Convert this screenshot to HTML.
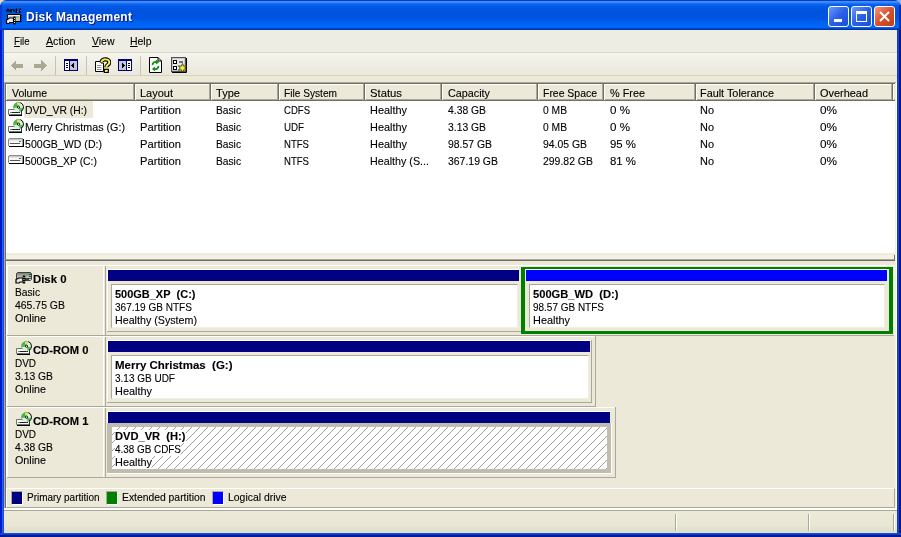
<!DOCTYPE html>
<html><head><meta charset="utf-8">
<style>
*{margin:0;padding:0;box-sizing:border-box}
html,body{width:901px;height:537px;overflow:hidden;background:#ECE9D8}
body{position:relative;font-family:"Liberation Sans",sans-serif;font-size:11px;color:#000}
.a{position:absolute}
.t{white-space:nowrap;line-height:13px;-webkit-text-stroke:0.12px #000}
.b{font-weight:bold}
#win{left:0;top:0;width:901px;height:537px;background:#ECE9D8;border-radius:6px 6px 0 0;overflow:hidden;will-change:transform}
#title{left:0;top:0;width:901px;height:30px;
background:linear-gradient(to bottom,#0a3cc0 0px,#0a3cc0 1px,#3d8eff 1px,#3d8eff 2px,#3487fb 2px,#3487fb 3px,#1c70f3 3px,#1c70f3 4px,#0e63ec 4px,#0e63ec 5px,#075ce8 5px,#075ce8 6px,#0059e5 6px,#0059e5 7px,#0057e3 7px,#0057e3 8px,#0056e1 8px,#0056e1 9px,#0055e0 9px,#0055e0 10px,#0054df 10px,#0054df 11px,#0053de 11px,#0053de 12px,#0053de 12px,#0053de 13px,#0053de 13px,#0053de 14px,#0053de 14px,#0053de 15px,#0053de 15px,#0053de 16px,#0054df 16px,#0054df 17px,#0055e0 17px,#0055e0 18px,#0056e2 18px,#0056e2 19px,#0058e5 19px,#0058e5 20px,#005ae8 20px,#005ae8 21px,#005deb 21px,#005deb 22px,#0060ef 22px,#0060ef 23px,#0063f3 23px,#0063f3 24px,#0065f6 24px,#0065f6 25px,#0066f8 25px,#0066f8 26px,#0066f8 26px,#0066f8 27px,#0063f2 27px,#0063f2 28px,#0048c8 28px,#0048c8 29px,#0036a8 29px,#0036a8 30px)}
#lf{left:0;top:30px;width:4px;height:507px;background:linear-gradient(to right,#0019cf 0,#0019cf 2px,#2060f5 2px,#2060f5 3px,#1a50c8 3px)}
#rf{left:897px;top:30px;width:4px;height:507px;background:linear-gradient(to right,#1f3fb0 0,#1f3fb0 1px,#1848c8 1px,#1848c8 2px,#001890 2px)}
#bf{left:0;top:533px;width:901px;height:4px;background:linear-gradient(to bottom,#1f4fbf 0,#1f4fbf 1px,#1038c0 1px,#1038c0 2px,#001a98 2px)}
.ttl{left:26px;top:10px;font-weight:bold;font-size:12px;line-height:14px;letter-spacing:0.28px;color:#fff;text-shadow:1px 1px 0 #0a1883;white-space:nowrap}
.tb{top:6px;width:21px;height:21px;border:1px solid #fff;border-radius:3px}
.menu{left:4px;top:30px;width:893px;height:22px;background:#eeede4}
.mi u{text-decoration:underline;text-underline-offset:1px}
.tool{left:4px;top:52px;width:893px;height:24px;background:linear-gradient(to bottom,#dcd8c8 0,#dcd8c8 1px,#f5f4ee 1px,#f1f0e8 8px,#eae8dc 23px,#d6d2c0 23px)}
.sep{top:56px;width:1px;height:19px;background:#c8c4b4}
.hatch{background-color:#fff;background-image:repeating-linear-gradient(-45deg,#fff 0,#fff 4.6px,#8a8a8a 4.6px,#8a8a8a 5.66px)}
</style></head><body>
<div class="a" style="left:0;top:0;width:10px;height:10px;background:#f2dca0"></div><div class="a" style="left:891px;top:0;width:10px;height:10px;background:#94acec"></div>
<div id="win" class="a">
<div id="title" class="a"></div>
<svg class="a" style="left:5px;top:7px" width="18" height="18" viewBox="0 0 18 18">
<path d="M1.5 4.5l1.5-2 1.5 2" fill="none" stroke="#000" stroke-width="1.6"/>
<path d="M6 5.5v-2.5h2.5l1 1.5" fill="none" stroke="#000" stroke-width="1.6"/>
<path d="M11.5 6v-4.5" stroke="#000" stroke-width="1.6"/>
<path d="M14.5 6l1-4.5" stroke="#000" stroke-width="1.6"/>
<path d="M3 3.5l0.5-.5M7 4h1M12.5 4v1M15.2 4l.3-1" stroke="#60a0ff" stroke-width="0.8"/>
<path d="M2.5 7.5h13v7h-13z" fill="#c4c4c0" stroke="#000"/>
<path d="M3 8.5h12" stroke="#f0f0f0"/>
<path d="M11 10h3" stroke="#60c060"/>
<path d="M16 8v1M16 10v1M16 12v1M16 14v1" stroke="#000" stroke-width="1.2"/>
<path d="M1.5 13l3-2h4v4.5h-3.5l-1 1h-2.5z" fill="#f0f0f0" stroke="#000" stroke-width="1.2"/>
<path d="M9.5 9.5v8" stroke="#000" stroke-width="2.2"/>
<path d="M9.5 11v1M9.5 13v1M9.5 15v1" stroke="#f0f060" stroke-width="1"/>
</svg>
<div class="a ttl">Disk Management</div>
<div class="a tb" style="left:828px;background:linear-gradient(135deg,#6a98ff,#2a5fe8 50%,#1d4fd8)"><div class="a" style="left:5px;top:12px;width:8px;height:3px;background:#fff"></div></div>
<div class="a tb" style="left:851px;background:linear-gradient(135deg,#6a98ff,#2a5fe8 50%,#1d4fd8)"><div class="a" style="left:4px;top:4px;width:11px;height:11px;border:1px solid #fff;border-top-width:3px"></div></div>
<div class="a tb" style="left:874px;background:linear-gradient(135deg,#f09a80,#d6512c 50%,#c23e1a)"><svg class="a" style="left:4px;top:4px" width="11" height="11"><path d="M1 1L10 10M10 1L1 10" stroke="#fff" stroke-width="2"/></svg></div>
<div class="a" style="left:0;top:5px;width:2px;height:25px;background:#0a3ad6"></div><div class="a" style="left:899px;top:5px;width:2px;height:25px;background:#0a2ab0"></div>
<div id="lf" class="a"></div>
<div id="rf" class="a"></div>
<div id="bf" class="a"></div>

<div class="a menu"></div>
<div class="a t mi" style="left:14px;top:35px;transform:scaleX(0.8748);transform-origin:0 0"><u>F</u>ile</div>
<div class="a t mi" style="left:46px;top:35px;transform:scaleX(0.9642);transform-origin:0 0"><u>A</u>ction</div>
<div class="a t mi" style="left:92px;top:35px;transform:scaleX(0.9518);transform-origin:0 0"><u>V</u>iew</div>
<div class="a t mi" style="left:130px;top:35px;transform:scaleX(0.9503);transform-origin:0 0"><u>H</u>elp</div>
<div class="a tool"></div>
<div class="a sep" style="left:55px"></div>
<div class="a sep" style="left:86px"></div>
<div class="a sep" style="left:140px"></div>

<svg class="a" style="left:9px;top:58px" width="16" height="14" viewBox="0 0 16 14" shape-rendering="crispEdges"><path d="M1.5 7.5L7 2V5.5H14V9.5H7V13Z" fill="#aaa795"/></svg>
<svg class="a" style="left:32px;top:58px" width="16" height="14" viewBox="0 0 16 14" shape-rendering="crispEdges"><path d="M14.5 7.5L9 2V5.5H2V9.5H9V13Z" fill="#aaa795"/></svg>
<svg class="a" style="left:64px;top:59px" width="14" height="12" viewBox="0 0 14 12" shape-rendering="crispEdges">
<rect x="0" y="0" width="14" height="12" fill="#000070"/><rect x="1" y="2" width="4" height="9" fill="#fff"/><rect x="6" y="2" width="7" height="9" fill="#c4c4dc"/>
<rect x="2" y="4" width="2" height="1" fill="#000"/><rect x="2" y="6" width="2" height="1" fill="#000"/><rect x="2" y="8" width="2" height="1" fill="#000"/>
<path d="M7 6.5L10 3.5V9.5Z" fill="#000"/></svg>
<svg class="a" style="left:95px;top:57px" width="16" height="16" viewBox="0 0 16 16">
<path d="M0.5 4.5h5.5v1.5h2.5v8.5h-8z" fill="#fff" stroke="#000"/>
<path d="M2 8.5h4.5M2 10.5h4.5M2 12.5h4.5" stroke="#909090"/>
<path d="M6.5 5.2c0-3.8 7.8-3.8 7.8 0.2c0 2.4-3 2.4-3 4.8" fill="none" stroke="#000" stroke-width="4.2"/>
<path d="M6.5 5.2c0-3.8 7.8-3.8 7.8 0.2c0 2.4-3 2.4-3 4.8" fill="none" stroke="#f8f048" stroke-width="2"/>
<rect x="9.3" y="12.3" width="4" height="3.2" fill="#f8f048" stroke="#000" stroke-width="1.2"/></svg>
<svg class="a" style="left:118px;top:59px" width="14" height="12" viewBox="0 0 14 12" shape-rendering="crispEdges">
<rect x="0" y="0" width="14" height="12" fill="#000070"/><rect x="9" y="2" width="4" height="9" fill="#fff"/><rect x="1" y="2" width="7" height="9" fill="#c4c4dc"/>
<rect x="10" y="4" width="2" height="1" fill="#000"/><rect x="10" y="6" width="2" height="1" fill="#000"/><rect x="10" y="8" width="2" height="1" fill="#000"/>
<path d="M7 6.5L4 3.5V9.5Z" fill="#000"/></svg>
<svg class="a" style="left:149px;top:57px" width="14" height="16" viewBox="0 0 14 16">
<path d="M0.5 0.5h8.5l3.5 3.5v11.5h-12z" fill="#fff" stroke="#000"/>
<path d="M9 0.5v3.5h3.5" fill="none" stroke="#000"/>
<path d="M3.6 8.2a3 3 0 0 1 4-3.2" fill="none" stroke="#189018" stroke-width="1.8"/>
<path d="M6.8 2.6l3.4 2.6-3.4 2.4z" fill="#189018"/>
<path d="M9.4 8.8a3 3 0 0 1-4 3.2" fill="none" stroke="#189018" stroke-width="1.8"/>
<path d="M6.2 9.6l-3.4 2.4 3.4 2.6z" fill="#189018"/></svg>
<svg class="a" style="left:171px;top:57px" width="17" height="16" viewBox="0 0 17 16">
<rect x="0.5" y="0.5" width="14" height="14" fill="#c8c8c8" stroke="#505050"/>
<path d="M1 15.5h14.5M15.5 1v14.5" stroke="#000"/>
<rect x="2" y="2" width="11" height="11" fill="#e8e8e8"/>
<rect x="2" y="3" width="4" height="4" fill="#000"/><rect x="3" y="4" width="2" height="2" fill="#fff"/>
<rect x="2" y="9" width="4" height="4" fill="#000"/><rect x="3" y="10" width="2" height="2" fill="#fff"/>
<path d="M8 5h4" stroke="#000" stroke-width="1.2"/>
<path d="M11.5 6.5l1.2 2.8 2.9-.6-1.8 2.3 1.8 2.3-2.9-.6-1.2 2.8-1.2-2.8-2.9.6 1.8-2.3-1.8-2.3 2.9.6z" fill="#f8f040" stroke="#303000" stroke-width="0.8"/></svg>


<div class="a" style="left:4px;top:82px;width:893px;height:1px;background:#aca899"></div>
<div class="a" style="left:4px;top:82px;width:1px;height:173px;background:#aca899"></div>
<div class="a" style="left:5px;top:83px;width:891px;height:171px;background:#fff;border-top:1px solid #716f64;border-left:1px solid #716f64;border-right:1px solid #f1efe2;border-bottom:1px solid #f1efe2"></div>
<div class="a" style="left:896px;top:82px;width:1px;height:173px;background:#fff"></div>
<div class="a" style="left:6px;top:84px;width:889px;height:17px;background:#ece9d8;border-bottom:1px solid #716f64"></div>
<div class="a" style="left:6px;top:99px;width:889px;height:1px;background:#aca899"></div>
<div class="a" style="left:6px;top:84px;width:889px;height:1px;background:#fff"></div>
<div class="a" style="left:6px;top:84px;width:1px;height:16px;background:#fff"></div>
<div class="a" style="left:133px;top:84px;width:1px;height:16px;background:#aca899"></div>
<div class="a" style="left:134px;top:84px;width:1px;height:17px;background:#716f64"></div>
<div class="a" style="left:135px;top:84px;width:1px;height:16px;background:#fff"></div>
<div class="a" style="left:209px;top:84px;width:1px;height:16px;background:#aca899"></div>
<div class="a" style="left:210px;top:84px;width:1px;height:17px;background:#716f64"></div>
<div class="a" style="left:211px;top:84px;width:1px;height:16px;background:#fff"></div>
<div class="a" style="left:277px;top:84px;width:1px;height:16px;background:#aca899"></div>
<div class="a" style="left:278px;top:84px;width:1px;height:17px;background:#716f64"></div>
<div class="a" style="left:279px;top:84px;width:1px;height:16px;background:#fff"></div>
<div class="a" style="left:363px;top:84px;width:1px;height:16px;background:#aca899"></div>
<div class="a" style="left:364px;top:84px;width:1px;height:17px;background:#716f64"></div>
<div class="a" style="left:365px;top:84px;width:1px;height:16px;background:#fff"></div>
<div class="a" style="left:440px;top:84px;width:1px;height:16px;background:#aca899"></div>
<div class="a" style="left:441px;top:84px;width:1px;height:17px;background:#716f64"></div>
<div class="a" style="left:442px;top:84px;width:1px;height:16px;background:#fff"></div>
<div class="a" style="left:536px;top:84px;width:1px;height:16px;background:#aca899"></div>
<div class="a" style="left:537px;top:84px;width:1px;height:17px;background:#716f64"></div>
<div class="a" style="left:538px;top:84px;width:1px;height:16px;background:#fff"></div>
<div class="a" style="left:602px;top:84px;width:1px;height:16px;background:#aca899"></div>
<div class="a" style="left:603px;top:84px;width:1px;height:17px;background:#716f64"></div>
<div class="a" style="left:604px;top:84px;width:1px;height:16px;background:#fff"></div>
<div class="a" style="left:694px;top:84px;width:1px;height:16px;background:#aca899"></div>
<div class="a" style="left:695px;top:84px;width:1px;height:17px;background:#716f64"></div>
<div class="a" style="left:696px;top:84px;width:1px;height:16px;background:#fff"></div>
<div class="a" style="left:813px;top:84px;width:1px;height:16px;background:#aca899"></div>
<div class="a" style="left:814px;top:84px;width:1px;height:17px;background:#716f64"></div>
<div class="a" style="left:815px;top:84px;width:1px;height:16px;background:#fff"></div>
<div class="a" style="left:891px;top:84px;width:1px;height:16px;background:#aca899"></div>
<div class="a" style="left:892px;top:84px;width:1px;height:17px;background:#716f64"></div>
<div class="a" style="left:893px;top:84px;width:1px;height:16px;background:#fff"></div>
<div class="a t" style="left:12px;top:87px;transform:scaleX(0.9536);transform-origin:0 0">Volume</div>
<div class="a t" style="left:140px;top:87px;transform:scaleX(0.9981);transform-origin:0 0">Layout</div>
<div class="a t" style="left:216px;top:87px;transform:scaleX(1.0059);transform-origin:0 0">Type</div>
<div class="a t" style="left:284px;top:87px;transform:scaleX(0.9222);transform-origin:0 0">File System</div>
<div class="a t" style="left:370px;top:87px;transform:scaleX(1.0250);transform-origin:0 0">Status</div>
<div class="a t" style="left:448px;top:87px;transform:scaleX(0.9810);transform-origin:0 0">Capacity</div>
<div class="a t" style="left:543px;top:87px;transform:scaleX(0.9489);transform-origin:0 0">Free Space</div>
<div class="a t" style="left:610px;top:87px;transform:scaleX(0.9868);transform-origin:0 0">% Free</div>
<div class="a t" style="left:700px;top:87px;transform:scaleX(0.9861);transform-origin:0 0">Fault Tolerance</div>
<div class="a t" style="left:820px;top:87px;transform:scaleX(0.9929);transform-origin:0 0">Overhead</div>
<div class="a" style="left:24px;top:101px;width:69px;height:17px;background:#ece9d8"></div>
<svg class="a" style="left:6px;top:101px" width="18" height="16" viewBox="0 0 18 16">
<path d="M2.5 8.5h13v5h-13z" fill="#fafafa" stroke="#707070" stroke-width="1"/>
<path d="M4 11.5h10" stroke="#202020" stroke-width="1"/>
<rect x="4" y="11" width="2" height="1" fill="#30b030"/>
<circle cx="12.5" cy="6.2" r="5.0" fill="#e4ebe4"/><path d="M12.5 6.2L7.58 7.07A5.0 5.0 0 0 1 10.79 1.50Z" fill="#3cc03c"/><path d="M12.5 6.2L10.79 1.50A5.0 5.0 0 0 1 14.61 1.67Z" fill="#e0e068"/><path d="M12.5 6.2L17.33 7.49A5.0 5.0 0 0 1 13.79 11.03Z" fill="#48c848"/><path d="M14.21 1.50A5.0 5.0 0 0 1 15.00 10.53" fill="none" stroke="#000" stroke-width="1.0"/><path d="M8.67 9.41A5.0 5.0 0 0 1 14.21 1.50" fill="none" stroke="#709070" stroke-width="0.6"/><circle cx="12.5" cy="6.2" r="1.1" fill="#fff" stroke="#000" stroke-width="0.9"/>
<path d="M3 14.5h13" stroke="#000" stroke-width="1"/>
<path d="M15.5 9v5" stroke="#303030" stroke-width="1"/>
</svg>
<div class="a t" style="left:25px;top:104px;transform:scaleX(0.9394);transform-origin:0 0">DVD_VR (H:)</div>
<div class="a t" style="left:140px;top:104px;transform:scaleX(1.0155);transform-origin:0 0">Partition</div>
<div class="a t" style="left:216px;top:104px;transform:scaleX(0.9292);transform-origin:0 0">Basic</div>
<div class="a t" style="left:284px;top:104px;transform:scaleX(0.8685);transform-origin:0 0">CDFS</div>
<div class="a t" style="left:370px;top:104px;transform:scaleX(0.9916);transform-origin:0 0">Healthy</div>
<div class="a t" style="left:448px;top:104px;transform:scaleX(0.9404);transform-origin:0 0">4.38 GB</div>
<div class="a t" style="left:543px;top:104px;transform:scaleX(0.9343);transform-origin:0 0">0 MB</div>
<div class="a t" style="left:610px;top:104px;transform:scaleX(1.0544);transform-origin:0 0">0 %</div>
<div class="a t" style="left:700px;top:104px;transform:scaleX(0.9956);transform-origin:0 0">No</div>
<div class="a t" style="left:820px;top:104px;transform:scaleX(1.0688);transform-origin:0 0">0%</div>
<svg class="a" style="left:6px;top:118px" width="18" height="16" viewBox="0 0 18 16">
<path d="M2.5 8.5h13v5h-13z" fill="#fafafa" stroke="#707070" stroke-width="1"/>
<path d="M4 11.5h10" stroke="#202020" stroke-width="1"/>
<rect x="4" y="11" width="2" height="1" fill="#30b030"/>
<circle cx="12.5" cy="6.2" r="5.0" fill="#e4ebe4"/><path d="M12.5 6.2L7.58 7.07A5.0 5.0 0 0 1 10.79 1.50Z" fill="#3cc03c"/><path d="M12.5 6.2L10.79 1.50A5.0 5.0 0 0 1 14.61 1.67Z" fill="#e0e068"/><path d="M12.5 6.2L17.33 7.49A5.0 5.0 0 0 1 13.79 11.03Z" fill="#48c848"/><path d="M14.21 1.50A5.0 5.0 0 0 1 15.00 10.53" fill="none" stroke="#000" stroke-width="1.0"/><path d="M8.67 9.41A5.0 5.0 0 0 1 14.21 1.50" fill="none" stroke="#709070" stroke-width="0.6"/><circle cx="12.5" cy="6.2" r="1.1" fill="#fff" stroke="#000" stroke-width="0.9"/>
<path d="M3 14.5h13" stroke="#000" stroke-width="1"/>
<path d="M15.5 9v5" stroke="#303030" stroke-width="1"/>
</svg>
<div class="a t" style="left:25px;top:121px;transform:scaleX(0.9741);transform-origin:0 0">Merry Christmas (G:)</div>
<div class="a t" style="left:140px;top:121px;transform:scaleX(1.0155);transform-origin:0 0">Partition</div>
<div class="a t" style="left:216px;top:121px;transform:scaleX(0.9292);transform-origin:0 0">Basic</div>
<div class="a t" style="left:284px;top:121px;transform:scaleX(0.8852);transform-origin:0 0">UDF</div>
<div class="a t" style="left:370px;top:121px;transform:scaleX(0.9916);transform-origin:0 0">Healthy</div>
<div class="a t" style="left:448px;top:121px;transform:scaleX(0.9404);transform-origin:0 0">3.13 GB</div>
<div class="a t" style="left:543px;top:121px;transform:scaleX(0.9343);transform-origin:0 0">0 MB</div>
<div class="a t" style="left:610px;top:121px;transform:scaleX(1.0544);transform-origin:0 0">0 %</div>
<div class="a t" style="left:700px;top:121px;transform:scaleX(0.9956);transform-origin:0 0">No</div>
<div class="a t" style="left:820px;top:121px;transform:scaleX(1.0688);transform-origin:0 0">0%</div>
<svg class="a" style="left:6px;top:135px" width="20" height="14" viewBox="0 0 20 14" shape-rendering="crispEdges">
<rect x="3" y="3" width="14" height="1" fill="#8c8c8c"/>
<rect x="2" y="4" width="1" height="7" fill="#8c8c8c"/>
<rect x="3" y="4" width="14" height="7" fill="#e4e4e4"/>
<rect x="3" y="4" width="14" height="1" fill="#c8c8c8"/>
<rect x="3" y="6" width="13" height="2" fill="#f4f4f4"/>
<rect x="4" y="8" width="10" height="1" fill="#5a5a5a"/>
<rect x="3" y="9" width="14" height="2" fill="#ffffff"/>
<rect x="13" y="6" width="2" height="1" fill="#2a8a2a"/>
<rect x="3" y="11" width="15" height="1" fill="#000"/>
<rect x="17" y="4" width="1" height="8" fill="#000"/>
<rect x="16" y="4" width="1" height="7" fill="#a0a0a0"/>
</svg>
<div class="a t" style="left:25px;top:138px;transform:scaleX(0.9614);transform-origin:0 0">500GB_WD (D:)</div>
<div class="a t" style="left:140px;top:138px;transform:scaleX(1.0155);transform-origin:0 0">Partition</div>
<div class="a t" style="left:216px;top:138px;transform:scaleX(0.9292);transform-origin:0 0">Basic</div>
<div class="a t" style="left:284px;top:138px;transform:scaleX(0.8705);transform-origin:0 0">NTFS</div>
<div class="a t" style="left:370px;top:138px;transform:scaleX(0.9916);transform-origin:0 0">Healthy</div>
<div class="a t" style="left:448px;top:138px;transform:scaleX(0.9456);transform-origin:0 0">98.57 GB</div>
<div class="a t" style="left:543px;top:138px;transform:scaleX(0.9456);transform-origin:0 0">94.05 GB</div>
<div class="a t" style="left:610px;top:138px;transform:scaleX(1.0361);transform-origin:0 0">95 %</div>
<div class="a t" style="left:700px;top:138px;transform:scaleX(0.9956);transform-origin:0 0">No</div>
<div class="a t" style="left:820px;top:138px;transform:scaleX(1.0688);transform-origin:0 0">0%</div>
<svg class="a" style="left:6px;top:152px" width="20" height="14" viewBox="0 0 20 14" shape-rendering="crispEdges">
<rect x="3" y="3" width="14" height="1" fill="#8c8c8c"/>
<rect x="2" y="4" width="1" height="7" fill="#8c8c8c"/>
<rect x="3" y="4" width="14" height="7" fill="#e4e4e4"/>
<rect x="3" y="4" width="14" height="1" fill="#c8c8c8"/>
<rect x="3" y="6" width="13" height="2" fill="#f4f4f4"/>
<rect x="4" y="8" width="10" height="1" fill="#5a5a5a"/>
<rect x="3" y="9" width="14" height="2" fill="#ffffff"/>
<rect x="13" y="6" width="2" height="1" fill="#2a8a2a"/>
<rect x="3" y="11" width="15" height="1" fill="#000"/>
<rect x="17" y="4" width="1" height="8" fill="#000"/>
<rect x="16" y="4" width="1" height="7" fill="#a0a0a0"/>
</svg>
<div class="a t" style="left:25px;top:155px;transform:scaleX(0.9441);transform-origin:0 0">500GB_XP (C:)</div>
<div class="a t" style="left:140px;top:155px;transform:scaleX(1.0155);transform-origin:0 0">Partition</div>
<div class="a t" style="left:216px;top:155px;transform:scaleX(0.9292);transform-origin:0 0">Basic</div>
<div class="a t" style="left:284px;top:155px;transform:scaleX(0.8705);transform-origin:0 0">NTFS</div>
<div class="a t" style="left:370px;top:155px;transform:scaleX(0.9742);transform-origin:0 0">Healthy (S...</div>
<div class="a t" style="left:448px;top:155px;transform:scaleX(0.9496);transform-origin:0 0">367.19 GB</div>
<div class="a t" style="left:543px;top:155px;transform:scaleX(0.9496);transform-origin:0 0">299.82 GB</div>
<div class="a t" style="left:610px;top:155px;transform:scaleX(1.0361);transform-origin:0 0">81 %</div>
<div class="a t" style="left:700px;top:155px;transform:scaleX(0.9956);transform-origin:0 0">No</div>
<div class="a t" style="left:820px;top:155px;transform:scaleX(1.0688);transform-origin:0 0">0%</div>

<div class="a" style="left:4px;top:255px;width:891px;height:5px;background:#f4f2e8"></div>
<div class="a" style="left:4px;top:259px;width:891px;height:1px;background:#aca899"></div>
<div class="a" style="left:4px;top:260px;width:891px;height:1px;background:#716f64"></div>
<div class="a" style="left:894px;top:255px;width:1px;height:6px;background:#716f64"></div>
<div class="a" style="left:5px;top:261px;width:1px;height:217px;background:#716f64"></div>
<div class="a" style="left:6px;top:261px;width:1px;height:217px;background:#fff"></div>
<div class="a" style="left:7px;top:265px;width:887px;height:1px;background:#fff"></div>
<div class="a" style="left:7px;top:265px;width:1px;height:70px;background:#fff"></div>
<div class="a" style="left:7px;top:335px;width:888px;height:1px;background:#aca899"></div>
<div class="a" style="left:894px;top:265px;width:1px;height:71px;background:#f4f2ea"></div>
<div class="a" style="left:103px;top:266px;width:1px;height:69px;background:#fff"></div>
<div class="a" style="left:105px;top:266px;width:1px;height:69px;background:#aca899"></div>
<svg class="a" style="left:14px;top:269px" width="20" height="16" viewBox="0 0 20 16">
<defs><linearGradient id="dkg265" x1="0" y1="0" x2="0" y2="1"><stop offset="0" stop-color="#707070"/><stop offset="0.3" stop-color="#a0a0a0"/><stop offset="1" stop-color="#e0e0e0"/></linearGradient></defs>
<path d="M3.5 3.5h13l1 1v6l-1 1h-13l-1-1v-6z" fill="url(#dkg265)" stroke="#404040" stroke-width="1"/>
<rect x="12" y="5" width="3" height="1.5" fill="#50c050"/>
<path d="M16 5v1M16 7v1M16 9v1" stroke="#000" stroke-width="1.2"/>
<path d="M2 10.5l3-1.5h4v4h-3l-1 1h-3z" fill="#e8e8e8" stroke="#000" stroke-width="1.2"/>
<path d="M10 6.5v8" stroke="#000" stroke-width="2.4"/>
<path d="M10 8v1M10 10v1M10 12v1" stroke="#f0f060" stroke-width="1"/>
<path d="M11 10h4" stroke="#000" stroke-width="1.4"/>
</svg>
<div class="a t b" style="left:33px;top:273px;transform:scaleX(1.0328);transform-origin:0 0">Disk 0</div>
<div class="a t" style="left:15px;top:286px;transform:scaleX(0.9292);transform-origin:0 0">Basic</div>
<div class="a t" style="left:15px;top:299px;transform:scaleX(0.9496);transform-origin:0 0">465.75 GB</div>
<div class="a t" style="left:15px;top:312px;transform:scaleX(0.9745);transform-origin:0 0">Online</div>
<div class="a" style="left:107px;top:269px;width:413px;height:1px;background:#fff"></div>
<div class="a" style="left:107px;top:269px;width:1px;height:62px;background:#fff"></div>
<div class="a" style="left:107px;top:331px;width:414px;height:1px;background:#aca899"></div>
<div class="a" style="left:108px;top:270px;width:411px;height:11px;background:#000080"></div>
<div class="a" style="left:111px;top:284px;width:407px;height:44px;background:#fff;border-top:1px solid #aca899;border-left:1px solid #aca899;border-right:1px solid #f1efe2;border-bottom:1px solid #f1efe2"></div>
<div class="a t b" style="left:115px;top:288px;transform:scaleX(0.9973);transform-origin:0 0">500GB_XP&nbsp; (C:)</div>
<div class="a t" style="left:115px;top:301px;transform:scaleX(0.9119);transform-origin:0 0">367.19 GB NTFS</div>
<div class="a t" style="left:115px;top:314px;transform:scaleX(0.9719);transform-origin:0 0">Healthy (System)</div>
<div class="a" style="left:521px;top:267px;width:372px;height:67px;border:solid #008000;border-width:2px 4px 3px 4px"></div>
<div class="a" style="left:525px;top:269px;width:363px;height:1px;background:#fff"></div>
<div class="a" style="left:526px;top:270px;width:361px;height:11px;background:#0000ff"></div>
<div class="a" style="left:529px;top:284px;width:356px;height:44px;background:#fff;border-top:1px solid #aca899;border-left:1px solid #aca899;border-right:1px solid #f1efe2;border-bottom:1px solid #f1efe2"></div>
<div class="a t b" style="left:533px;top:288px;transform:scaleX(1.0137);transform-origin:0 0">500GB_WD&nbsp; (D:)</div>
<div class="a t" style="left:533px;top:301px;transform:scaleX(0.9066);transform-origin:0 0">98.57 GB NTFS</div>
<div class="a t" style="left:533px;top:314px;transform:scaleX(0.9916);transform-origin:0 0">Healthy</div>
<div class="a" style="left:7px;top:336px;width:588px;height:1px;background:#fff"></div>
<div class="a" style="left:7px;top:336px;width:1px;height:70px;background:#fff"></div>
<div class="a" style="left:7px;top:406px;width:589px;height:1px;background:#aca899"></div>
<div class="a" style="left:595px;top:336px;width:1px;height:71px;background:#aca899"></div>
<div class="a" style="left:103px;top:337px;width:1px;height:69px;background:#fff"></div>
<div class="a" style="left:105px;top:337px;width:1px;height:69px;background:#aca899"></div>
<svg class="a" style="left:14px;top:340px" width="18" height="16" viewBox="0 0 18 16">
<path d="M2.5 8.5h13v5h-13z" fill="#fafafa" stroke="#707070" stroke-width="1"/>
<path d="M4 11.5h10" stroke="#202020" stroke-width="1"/>
<rect x="4" y="11" width="2" height="1" fill="#30b030"/>
<circle cx="12.5" cy="6.2" r="5.0" fill="#e4ebe4"/><path d="M12.5 6.2L7.58 7.07A5.0 5.0 0 0 1 10.79 1.50Z" fill="#3cc03c"/><path d="M12.5 6.2L10.79 1.50A5.0 5.0 0 0 1 14.61 1.67Z" fill="#e0e068"/><path d="M12.5 6.2L17.33 7.49A5.0 5.0 0 0 1 13.79 11.03Z" fill="#48c848"/><path d="M14.21 1.50A5.0 5.0 0 0 1 15.00 10.53" fill="none" stroke="#000" stroke-width="1.0"/><path d="M8.67 9.41A5.0 5.0 0 0 1 14.21 1.50" fill="none" stroke="#709070" stroke-width="0.6"/><circle cx="12.5" cy="6.2" r="1.1" fill="#fff" stroke="#000" stroke-width="0.9"/>
<path d="M3 14.5h13" stroke="#000" stroke-width="1"/>
<path d="M15.5 9v5" stroke="#303030" stroke-width="1"/>
</svg>
<div class="a t b" style="left:33px;top:344px;transform:scaleX(1.0207);transform-origin:0 0">CD-ROM 0</div>
<div class="a t" style="left:15px;top:357px;transform:scaleX(0.9044);transform-origin:0 0">DVD</div>
<div class="a t" style="left:15px;top:370px;transform:scaleX(0.9404);transform-origin:0 0">3.13 GB</div>
<div class="a t" style="left:15px;top:383px;transform:scaleX(0.9745);transform-origin:0 0">Online</div>
<div class="a" style="left:107px;top:340px;width:484px;height:1px;background:#fff"></div>
<div class="a" style="left:107px;top:340px;width:1px;height:62px;background:#fff"></div>
<div class="a" style="left:591px;top:340px;width:1px;height:63px;background:#aca899"></div>
<div class="a" style="left:107px;top:402px;width:485px;height:1px;background:#aca899"></div>
<div class="a" style="left:108px;top:341px;width:482px;height:11px;background:#000080"></div>
<div class="a" style="left:111px;top:355px;width:478px;height:44px;background:#fff;border-top:1px solid #aca899;border-left:1px solid #aca899;border-right:1px solid #f1efe2;border-bottom:1px solid #f1efe2"></div>
<div class="a t b" style="left:115px;top:359px;transform:scaleX(1.0444);transform-origin:0 0">Merry Christmas&nbsp; (G:)</div>
<div class="a t" style="left:115px;top:372px;transform:scaleX(0.9082);transform-origin:0 0">3.13 GB UDF</div>
<div class="a t" style="left:115px;top:385px;transform:scaleX(0.9916);transform-origin:0 0">Healthy</div>
<div class="a" style="left:7px;top:407px;width:608px;height:1px;background:#fff"></div>
<div class="a" style="left:7px;top:407px;width:1px;height:70px;background:#fff"></div>
<div class="a" style="left:7px;top:477px;width:609px;height:1px;background:#aca899"></div>
<div class="a" style="left:615px;top:407px;width:1px;height:71px;background:#aca899"></div>
<div class="a" style="left:103px;top:408px;width:1px;height:69px;background:#fff"></div>
<div class="a" style="left:105px;top:408px;width:1px;height:69px;background:#aca899"></div>
<svg class="a" style="left:14px;top:411px" width="18" height="16" viewBox="0 0 18 16">
<path d="M2.5 8.5h13v5h-13z" fill="#fafafa" stroke="#707070" stroke-width="1"/>
<path d="M4 11.5h10" stroke="#202020" stroke-width="1"/>
<rect x="4" y="11" width="2" height="1" fill="#30b030"/>
<circle cx="12.5" cy="6.2" r="5.0" fill="#e4ebe4"/><path d="M12.5 6.2L7.58 7.07A5.0 5.0 0 0 1 10.79 1.50Z" fill="#3cc03c"/><path d="M12.5 6.2L10.79 1.50A5.0 5.0 0 0 1 14.61 1.67Z" fill="#e0e068"/><path d="M12.5 6.2L17.33 7.49A5.0 5.0 0 0 1 13.79 11.03Z" fill="#48c848"/><path d="M14.21 1.50A5.0 5.0 0 0 1 15.00 10.53" fill="none" stroke="#000" stroke-width="1.0"/><path d="M8.67 9.41A5.0 5.0 0 0 1 14.21 1.50" fill="none" stroke="#709070" stroke-width="0.6"/><circle cx="12.5" cy="6.2" r="1.1" fill="#fff" stroke="#000" stroke-width="0.9"/>
<path d="M3 14.5h13" stroke="#000" stroke-width="1"/>
<path d="M15.5 9v5" stroke="#303030" stroke-width="1"/>
</svg>
<div class="a t b" style="left:33px;top:415px;transform:scaleX(1.0207);transform-origin:0 0">CD-ROM 1</div>
<div class="a t" style="left:15px;top:428px;transform:scaleX(0.9044);transform-origin:0 0">DVD</div>
<div class="a t" style="left:15px;top:441px;transform:scaleX(0.9404);transform-origin:0 0">4.38 GB</div>
<div class="a t" style="left:15px;top:454px;transform:scaleX(0.9745);transform-origin:0 0">Online</div>
<div class="a" style="left:107px;top:411px;width:504px;height:1px;background:#fff"></div>
<div class="a" style="left:107px;top:411px;width:1px;height:62px;background:#fff"></div>
<div class="a" style="left:611px;top:423px;width:1px;height:51px;background:#fff"></div>
<div class="a" style="left:107px;top:473px;width:505px;height:1px;background:#fff"></div>
<div class="a" style="left:108px;top:412px;width:502px;height:11px;background:#000080"></div>
<div class="a" style="left:107px;top:423px;width:504px;height:50px;background:#c0bdae"></div>
<svg class="a" style="left:112px;top:427px" width="495" height="42" shape-rendering="crispEdges"><defs><pattern id="hp" patternUnits="userSpaceOnUse" width="8" height="8" x="0" y="0"><g fill="#a0a0a0"><rect x="7" y="0" width="1" height="1"/><rect x="6" y="1" width="1" height="1"/><rect x="5" y="2" width="1" height="1"/><rect x="4" y="3" width="1" height="1"/><rect x="3" y="4" width="1" height="1"/><rect x="2" y="5" width="1" height="1"/><rect x="1" y="6" width="1" height="1"/><rect x="0" y="7" width="1" height="1"/></g></pattern></defs><rect width="495" height="42" fill="#fff"/><rect width="495" height="42" fill="url(#hp)"/></svg>
<div class="a t b" style="left:115px;top:430px;background:#fff;transform:scaleX(1.0121);transform-origin:0 0">DVD_VR&nbsp; (H:)</div>
<div class="a t" style="left:115px;top:443px;background:#fff;transform:scaleX(0.8991);transform-origin:0 0">4.38 GB CDFS</div>
<div class="a t" style="left:115px;top:456px;background:#fff;transform:scaleX(0.9916);transform-origin:0 0">Healthy</div>

<!-- legend -->
<div class="a" style="left:6px;top:488px;width:889px;height:20px;border-top:1px solid #fff;border-left:1px solid #fff;border-right:1px solid #aca899;border-bottom:1px solid #aca899"></div>
<div class="a" style="left:11px;top:491px;width:12px;height:14px;background:#000080;border-top:1px solid #aca899;border-left:1px solid #aca899;border-right:1px solid #fff;border-bottom:1px solid #fff"></div>
<div class="a t" style="left:27px;top:491px;transform:scaleX(0.905);transform-origin:0 0;letter-spacing:0">Primary partition</div>
<div class="a" style="left:106px;top:491px;width:12px;height:14px;background:#008000;border-top:1px solid #aca899;border-left:1px solid #aca899;border-right:1px solid #fff;border-bottom:1px solid #fff"></div>
<div class="a t" style="left:122px;top:491px;transform:scaleX(0.941);transform-origin:0 0;letter-spacing:0">Extended partition</div>
<div class="a" style="left:212px;top:491px;width:12px;height:14px;background:#0000ff;border-top:1px solid #aca899;border-left:1px solid #aca899;border-right:1px solid #fff;border-bottom:1px solid #fff"></div>
<div class="a t" style="left:228px;top:491px;transform:scaleX(0.947);transform-origin:0 0;letter-spacing:0">Logical drive</div>

<div class="a" style="left:4px;top:82px;width:1px;height:427px;background:#a9acb0"></div>
<div class="a" style="left:5px;top:83px;width:1px;height:425px;background:#716f64"></div>
<div class="a" style="left:895px;top:83px;width:1px;height:425px;background:#f1efe2"></div>
<div class="a" style="left:896px;top:82px;width:1px;height:427px;background:#fff"></div>
<!-- status bar -->
<div class="a" style="left:4px;top:508px;width:893px;height:2px;background:#fff"></div>
<div class="a" style="left:4px;top:510px;width:893px;height:1px;background:#aca899"></div>
<div class="a" style="left:4px;top:511px;width:893px;height:21px;background:linear-gradient(to bottom,#ecead9,#e9e6d5 70%,#e0dcc8)"></div>
<div class="a" style="left:4px;top:532px;width:893px;height:1px;background:#d0e4ff"></div>
<div class="a" style="left:675px;top:514px;width:1px;height:17px;background:#aca899"></div>
<div class="a" style="left:676px;top:514px;width:1px;height:17px;background:#fff"></div>
<div class="a" style="left:808px;top:514px;width:1px;height:17px;background:#aca899"></div>
<div class="a" style="left:809px;top:514px;width:1px;height:17px;background:#fff"></div>
<div class="a" style="left:893px;top:514px;width:1px;height:17px;background:#aca899"></div>
<div class="a" style="left:894px;top:514px;width:1px;height:17px;background:#fff"></div>
</div>
</body></html>
